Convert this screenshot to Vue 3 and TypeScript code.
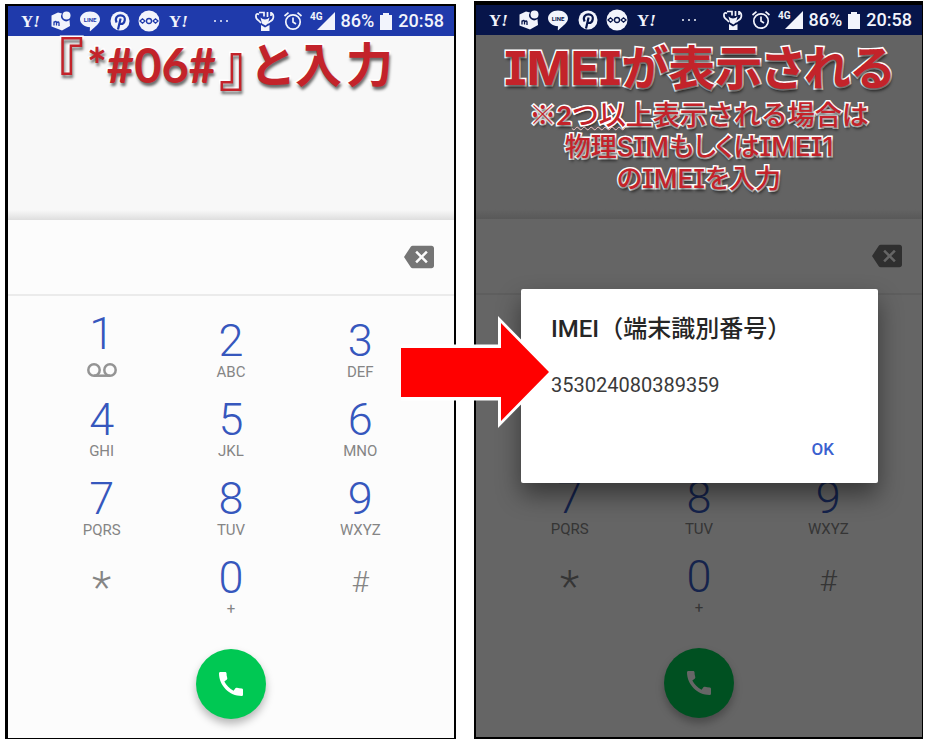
<script setup lang="ts">
interface Key {
  main: string
  sub?: string
  kind: 'digit' | 'voicemail' | 'star' | 'hash'
}

interface Phone {
  id: string
  dimmed: boolean
}

const phones: Phone[] = [
  { id: 'dial', dimmed: false },
  { id: 'result', dimmed: true },
]

const keys: Key[] = [
  { main: '1', kind: 'voicemail' },
  { main: '2', sub: 'ABC', kind: 'digit' },
  { main: '3', sub: 'DEF', kind: 'digit' },
  { main: '4', sub: 'GHI', kind: 'digit' },
  { main: '5', sub: 'JKL', kind: 'digit' },
  { main: '6', sub: 'MNO', kind: 'digit' },
  { main: '7', sub: 'PQRS', kind: 'digit' },
  { main: '8', sub: 'TUV', kind: 'digit' },
  { main: '9', sub: 'WXYZ', kind: 'digit' },
  { main: '*', kind: 'star' },
  { main: '0', sub: '+', kind: 'digit' },
  { main: '#', kind: 'hash' },
]
</script>

<template>
  <main class="guide">
    <section v-for="phone in phones" :key="phone.id" class="phone" :class="{ 'phone--dimmed': phone.dimmed }">
      <header class="status">
        <div class="status__apps">
          <svg class="icon" viewBox="0 0 22 22"><text class="yahoo" x="1" y="17">Y<tspan class="yahoo__bang">!</tspan></text></svg>
          <svg class="icon" viewBox="0 0 22 22">
            <path class="fill" d="M1.500 5.500 8 2.500l4 1a5 5 0 0 0 7.500 6.500l.5 6-8 4.500-10.500-4z" />
            <circle class="fill" cx="16.500" cy="5.500" r="4" />
            <path class="cut" d="M4 15.500v-4M4 12.500q2-2 2.500 0v3M6.500 13q2-2 2.500 0v3" />
          </svg>
          <svg class="icon" viewBox="0 0 22 22">
            <path class="fill" d="M11 1.500c5.500 0 10 3.400 10 7.800 0 4-4.500 7.300-9.500 11.700-.6.400-.8.200-.7-.6l.2-3.200C5.500 17 1 13.500 1 9.300 1 4.900 5.500 1.500 11 1.500z" />
            <text class="line" x="11" y="11.500">LINE</text>
          </svg>
          <svg class="icon" viewBox="0 0 22 22">
            <circle class="fill" cx="11" cy="11" r="9.500" />
            <path class="cut cut--bold" d="M7.600 12.500C5.400 8 8.500 5.300 11.500 5.300c3 0 4.700 2 4.300 4.700-.4 3-2.600 4.700-4.600 3.600M11.600 8.500 9 19.500" />
          </svg>
          <svg class="icon" viewBox="0 0 22 22">
            <circle class="fill" cx="11" cy="11" r="10.500" />
            <path class="cut" d="M2 11 4.500 8.800 7 11 4.500 13.200zM20 11l-2.500-2.200L15 11l2.500 2.200z" />
            <circle class="cut" cx="11" cy="11" r="2.500" />
          </svg>
          <svg class="icon" viewBox="0 0 22 22"><text class="yahoo" x="1" y="17">Y<tspan class="yahoo__bang">!</tspan></text></svg>
        </div>
        <svg class="icon icon--more" viewBox="0 0 22 22">
          <circle class="fill" cx="5" cy="11" r="1" /><circle class="fill" cx="11" cy="11" r="1" /><circle class="fill" cx="17" cy="11" r="1" />
        </svg>
        <div class="status__system">
          <svg class="icon" viewBox="0 0 22 22">
            <path class="stroke" d="M5 4.500C1.500 2 .5 8 4.500 10.500L7 13M5 2.500h5v4M17.500 3c3 2 2.500 7-1.500 8.500l-2 1.500M13.500 2v5M17 2v4" />
            <path class="fill" d="M6.500 7.500q4.500 4 9 0l-1.500 6-2.500 2-3.500-2zM7 15l4 2.500 4.500-2.500v6H7z" />
          </svg>
          <svg class="icon" viewBox="0 0 22 22">
            <circle class="stroke" cx="11" cy="12" r="7.200" />
            <path class="stroke" d="M11 7.500V12l3 2M2.500 6 6.500 2.700M19.500 6l-4-3.300" />
          </svg>
          <span class="signal">
            <span class="signal__type">4G</span>
            <svg class="signal__bars" viewBox="0 0 18 18"><path class="fill" d="M18 0v18H0z" /></svg>
          </span>
          <span class="status__text">86%</span>
          <svg class="battery" viewBox="0 0 12 17"><path class="fill" d="M3 0h6v2h3v15H0V2h3z" /></svg>
          <time class="status__text">20:58</time>
        </div>
      </header>

      <div class="screen">
        <div class="recents"></div>
        <div class="entry">
          <input class="entry__number" type="tel" aria-label="電話番号" />
          <button class="entry__erase" type="button" aria-label="削除">
            <svg viewBox="0 0 24 24"><path d="M22 3H7c-.69 0-1.230.35-1.590.88L0 12l5.410 8.110c.36.53.9.89 1.590.89h15c1.100 0 2-.9 2-2V5c0-1.100-.9-2-2-2zm-3 12.590L17.590 17 14 13.410 10.410 17 9 15.590 12.590 12 9 8.410 10.410 7 14 10.590 17.590 7 19 8.410 15.410 12 19 15.590z" /></svg>
          </button>
        </div>
        <div class="keypad">
          <button v-for="key in keys" :key="key.main" class="key" :class="`key--${key.kind}`" type="button">
            <span class="key__main">{{ key.main }}</span>
            <span v-if="key.sub" class="key__sub">{{ key.sub }}</span>
            <svg v-if="key.kind === 'voicemail'" class="key__voicemail" viewBox="0 0 30 15">
              <circle cx="7" cy="7" r="5.700" /><circle cx="23" cy="7" r="5.700" /><path d="M7 12.700h16" />
            </svg>
          </button>
        </div>
        <button class="call" type="button" aria-label="発信">
          <svg viewBox="0 0 24 24"><path d="M20.010 15.380c-1.230 0-2.420-.2-3.530-.56a.977.977 0 0 0-1.010.24l-1.570 1.970c-2.830-1.350-5.480-3.900-6.890-6.830l1.950-1.660c.27-.28.35-.67.24-1.020-.37-1.110-.56-2.300-.56-3.530 0-.54-.45-.99-.99-.99H4.190C3.650 3 3 3.240 3 3.990 3 13.280 10.730 21 20.010 21c.71 0 .99-.63.99-1.180v-3.450c0-.54-.45-.99-.99-.99z" /></svg>
        </button>
        <div v-if="phone.dimmed" class="scrim"></div>
      </div>

      <h1 v-if="!phone.dimmed" class="caption caption--dial">
        <span class="caption__bracket">『</span><span class="caption__code">*#06#</span><span class="caption__bracket">』</span><span>と</span><span>入</span><span>力</span>
      </h1>
      <div v-else class="caption caption--result">
        <h2 class="caption__title">IMEIが表示される</h2>
        <p class="caption__note caption__note--wide">※<span class="caption__two">2</span><span class="caption__wave">つ以</span>上表示される場合は</p>
        <p class="caption__note">物理SIMもしくはIMEI1</p>
        <p class="caption__note">のIMEIを入力</p>
      </div>

      <div v-if="phone.dimmed" class="dialog" role="dialog" aria-labelledby="imei-title">
        <h3 id="imei-title" class="dialog__title">IMEI（端末識別番号）</h3>
        <p class="dialog__number">353024080389359</p>
        <button class="dialog__ok" type="button">OK</button>
      </div>
    </section>

    <svg class="arrow" viewBox="0 0 156 120" aria-hidden="true">
      <path class="arrow__edge" d="M4 32.500H101V4L156 60 101 116V88.500H4z" />
      <path class="arrow__body" d="M4 36H104V11L152 60 104 109V85H4z" />
    </svg>
  </main>
</template>

<style>
body {
  margin: 0;
  background: #fff;
}
</style>

<style scoped>
.guide {
  position: relative;
  display: flex;
  align-items: flex-start;
  gap: 18px;
  padding: 1px 5px 5px;
  font-family: Roboto, "Noto Sans CJK JP", sans-serif;
}

.guide * {
  margin: 0;
}

button {
  padding: 0;
  border: 0;
  background: none;
  font: inherit;
}

.guide .phone {
  --status: #1f3aab;
  position: relative;
  flex: 1 1 0;
  min-width: 0;
  margin-top: 3px;
  border: solid #000;
  border-width: 2px 2px 1px 3px;
}

.guide .phone--dimmed {
  --status: #07154a;
  margin-top: 0;
  border-width: 4px 1px 2px 2px;
}

.status {
  display: flex;
  align-items: center;
  box-sizing: border-box;
  height: 30px;
  padding: 0 10px 0 12px;
  background: var(--status);
  color: #f2f4fc;
}

.status__apps {
  display: flex;
  flex: 0 0 170px;
  justify-content: space-between;
}

.icon {
  flex: none;
  width: 22px;
  height: 22px;
}

.status .icon--more {
  margin-left: 20px;
}

.status__system {
  display: flex;
  flex: 1;
  align-items: center;
  justify-content: flex-end;
  gap: 6px;
}

.status__text {
  font-size: 18px;
  font-weight: 500;
  line-height: 24px;
}

.signal {
  display: flex;
}

.signal__type {
  font-size: 10px;
  font-weight: 700;
  line-height: 10px;
}

.status .signal__bars {
  width: 18px;
  height: 18px;
  margin-left: -6px;
}

.battery {
  width: 12px;
  height: 17px;
}

.fill {
  fill: #f2f4fc;
}

.stroke {
  fill: none;
  stroke: #f2f4fc;
  stroke-width: 1.7;
}

.cut {
  fill: none;
  stroke: var(--status);
  stroke-width: 1.3;
}

.cut--bold {
  stroke-width: 2.2;
}

.yahoo {
  fill: #f2f4fc;
  font: 700 17px "Liberation Serif", serif;
}

.yahoo__bang {
  font-style: italic;
}

.line {
  fill: var(--status);
  font: 700 6px Roboto, sans-serif;
  text-anchor: middle;
}

.screen {
  position: relative;
  background: #fcfcfc;
}

.recents {
  height: 184px;
  background: linear-gradient(#f8f8f8 0, #f8f8f8 174px, #dedede 184px);
}

.entry {
  display: flex;
  align-items: center;
  box-sizing: border-box;
  height: 76px;
  padding: 0 20px;
  border-bottom: 2px solid #ebebeb;
}

.entry__number {
  flex: 1;
  width: 0;
  min-width: 0;
  border: 0;
  outline: 0;
  background: none;
  font: 32px Roboto, sans-serif;
}

.entry__erase,
.entry__erase svg {
  display: block;
  width: 30px;
  height: 30px;
  fill: #757575;
}

.keypad {
  display: grid;
  grid-template-columns: repeat(3, 29%);
  justify-content: center;
  row-gap: 17px;
  padding-top: 23px;
}

.key {
  display: flex;
  flex-direction: column;
  align-items: center;
  justify-content: flex-end;
  height: 62px;
  color: #858585;
}

.key__main {
  color: #3657bd;
  font-size: 45px;
  font-weight: 300;
  line-height: 44px;
}

.key__sub {
  font-size: 15px;
  line-height: 18px;
}

.key__voicemail {
  flex: none;
  width: 30px;
  height: 15px;
  padding: 7px 0 3px;
  fill: none;
  stroke: #949494;
  stroke-width: 2.5;
}

.key--star,
.key--hash {
  justify-content: flex-start;
}

.key--star .key__main {
  color: #858585;
  line-height: 64px;
}

.key--hash .key__main {
  color: #858585;
  font-size: 30px;
  line-height: 52px;
}

.screen .call {
  display: flex;
  align-items: center;
  justify-content: center;
  width: 70px;
  height: 70px;
  margin: 31px auto 0;
  border-radius: 50%;
  background: #00c853;
  box-shadow: 0 5px 9px rgba(0, 0, 0, 0.28);
}

.call svg {
  width: 32px;
  height: 32px;
  fill: #fff;
}

.screen::after {
  display: block;
  height: 19px;
  content: "";
}

.scrim {
  position: absolute;
  inset: 0;
  background: rgba(0, 0, 0, 0.6);
}

.caption {
  position: absolute;
  right: 0;
  left: 0;
  color: #c3232a;
  font-family: Inter, "Noto Sans CJK JP", sans-serif;
  font-feature-settings: "palt", "cv08";
  font-weight: 700;
  paint-order: stroke fill;
  text-align: center;
  text-shadow: 1px 3px 3px rgba(0, 0, 0, 0.6);
  white-space: nowrap;
  -webkit-text-stroke: 3px #fff;
}

.caption--dial {
  top: 29px;
  display: flex;
  align-items: center;
  justify-content: center;
  gap: 4px;
  padding-right: 14px;
  font-size: 47px;
  line-height: 60px;
}

.caption__bracket {
  font-size: 56px;
}

.caption__code {
  font-family: Lato, sans-serif;
}

.caption--result {
  top: 33px;
}

.caption__title {
  font-size: 47px;
  line-height: 60px;
}

.caption__note {
  font-size: 26px;
  font-weight: 500;
  line-height: 32px;
}

.caption__note--wide {
  font-family: "Noto Sans CJK JP", sans-serif;
  font-size: 27px;
  font-feature-settings: normal;
}

.caption__two {
  font-family: Lato, sans-serif;
  font-weight: 700;
}

.caption__wave {
  text-decoration: underline wavy 1px #f6c4c6;
}

.dialog {
  position: absolute;
  top: 284px;
  right: 44px;
  left: 45px;
  display: flex;
  flex-direction: column;
  box-sizing: border-box;
  padding: 24px 30px 22px;
  border-radius: 2px;
  background: #fff;
  box-shadow: 0 12px 24px rgba(0, 0, 0, 0.45);
  color: #262626;
}

.dialog__title {
  font-size: 24px;
  font-weight: 500;
  line-height: 32px;
  white-space: nowrap;
}

.dialog .dialog__number {
  margin-top: 28px;
  color: #3a3a3a;
  font-size: 20px;
  line-height: 24px;
}

.dialog .dialog__ok {
  align-self: flex-end;
  margin: 40px 14px 0 0;
  color: #3a61cf;
  font-size: 17px;
  font-weight: 500;
  line-height: 24px;
}

.arrow {
  position: absolute;
  top: 312px;
  left: calc(50% - 67px);
  width: 156px;
  height: 120px;
}

.arrow__edge {
  fill: #fff;
}

.arrow__body {
  fill: #f00;
}
</style>
